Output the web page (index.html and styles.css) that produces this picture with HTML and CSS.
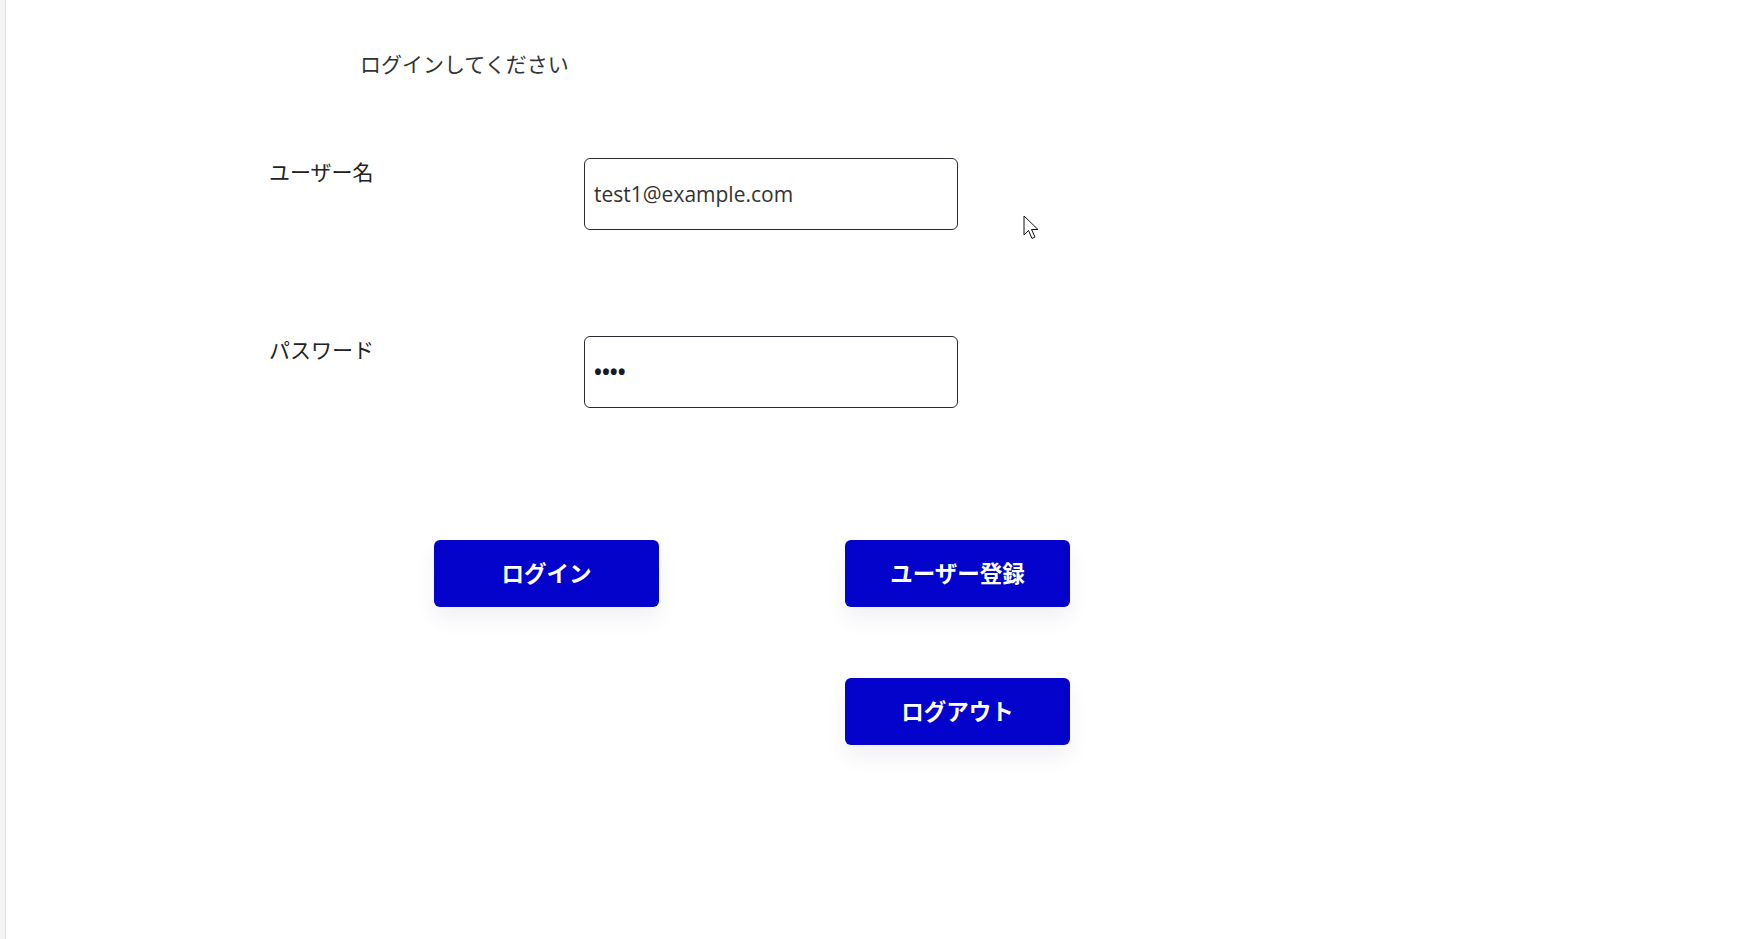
FILE: index.html
```html
<!DOCTYPE html>
<html lang="ja">
<head>
  <meta charset="UTF-8">
  <title>ログイン</title>
  <meta name="viewport" content="width=device-width, initial-scale=1">
  <link rel="stylesheet" href="styles.css">
</head>
<body>

  <div class="frame">
    <p class="title">ログインしてください</p>

    <form id="loginForm" class="login">
      <div class="row">
        <label for="user">ユーザー名</label>
        <input type="text" id="user" value="test1@example.com">
      </div>

      <div class="row">
        <label for="pass">パスワード</label>
        <input type="password" id="pass" value="1234">
      </div>

      <div class="actions">
        <button type="submit">ログイン</button>
        <button type="button">ユーザー登録</button>
        <button type="button" class="logout">ログアウト</button>
      </div>
    </form>

    <svg class="cursor" width="18" height="27" viewBox="0 0 18 27">
      <path d="M1 1 L1 20 L5.5 15.5 L9 23.5 L12 22 L8.5 14.5 L15 14.5 Z" fill="#fff" stroke="#111" stroke-width="1" stroke-linejoin="miter"/>
    </svg>
  </div>

</body>
</html>
```

FILE: styles.css
```css
html, body { margin: 0; padding: 0; background: #fff; }
body { font-family: "Noto Sans CJK JP", "Noto Sans", sans-serif; color: #222; border-left: 5px solid #f4f4f4; }
.frame { position: relative; min-height: 100vh; border-left: 1px solid #e2e2e2; box-sizing: border-box; }
.title { margin: 0; padding: 48px 0 0 354px; font-size: 21px; line-height: 30px; color: #333; font-weight: 400; }

.login { padding: 80px 0 0 263px; }
.row { display: grid; grid-template-columns: 315px 374px; margin-bottom: 106px; }
.row label { font-size: 21px; line-height: 26px; color: #222; }
.row input { box-sizing: border-box; width: 374px; height: 72px; padding: 0 9px; border: 1px solid #2a2a35; border-radius: 6px; font-family: "Open Sans", sans-serif; font-size: 21px; color: #333; outline: none; }
.row input[type=password] { font-size: 21px; letter-spacing: 0; font-weight: 700; color: #1a1a2a; }

.actions { display: grid; grid-template-columns: 225px 225px; column-gap: 186px; row-gap: 71px; margin-top: 132px; padding-left: 165px; }
.actions button { height: 67px; padding: 0 0 4px; border: none; border-radius: 6px; background: #0303cc; color: #fff; font-family: "Noto Sans CJK JP", sans-serif; font-weight: 700; font-size: 22.5px; box-shadow: 0 12px 22px rgba(20, 20, 80, 0.06); cursor: pointer; }
.actions .logout { grid-column: 2; }

.cursor { position: absolute; left: 1017px; top: 215px; }
```
